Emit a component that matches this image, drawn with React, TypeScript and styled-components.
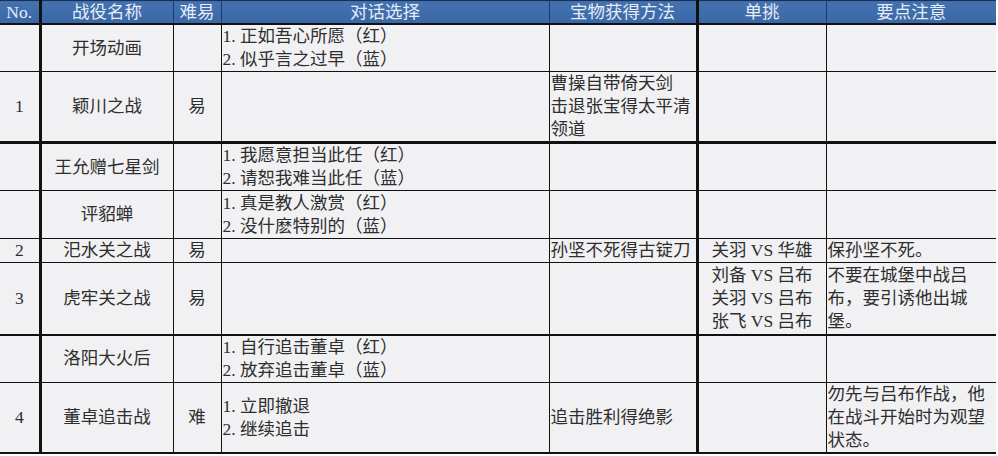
import React from 'react'
import styled, { createGlobalStyle } from 'styled-components'

const Global = createGlobalStyle`
  html, body {
    margin: 0;
    padding: 0;
    background: #ffffff;
  }
`

const Sheet = styled.table`
  width: 996px;
  table-layout: fixed;
  border-collapse: collapse;
  font-family: "Liberation Serif", "Noto Sans CJK SC", serif;
  font-size: 17.5px;
  color: #2e2e2e;
  text-spacing-trim: space-all;
  border-bottom: 2px solid #111;
`

const HeadCell = styled.th<{ $thick?: boolean }>`
  height: 22px;
  padding: 0;
  background: linear-gradient(#4472b0, #3a67a6);
  color: #e4ecf7;
  font-weight: normal;
  font-size: 17.5px;
  line-height: 22px;
  text-align: center;
  border-top: 1px solid #1c2f52;
  border-bottom: 2px solid #111;
  border-left: ${p => (p.$thick ? '3px solid #111' : '1px solid #1f3b66')};
  &:first-child {
    border-left: none;
  }
`

const Row = styled.tr<{ $h: number; $bottom?: number }>`
  height: ${p => p.$h}px;
  & > td {
    border-bottom: ${p => p.$bottom ?? 1}px solid #111;
  }
`

const Cell = styled.td<{ $align?: 'left' | 'center'; $thick?: boolean }>`
  padding: 0 0 0 ${p => (p.$align === 'left' ? '1px' : '0')};
  background: #f1f1f3;
  text-align: ${p => p.$align ?? 'center'};
  vertical-align: middle;
  line-height: 23px;
  white-space: pre-line;
  overflow: hidden;
  border-left: ${p => (p.$thick ? '3px' : '1px')} solid #111;
  &:first-child {
    border-left: none;
  }
`

type Line = {
  h: number
  bottom?: number
  no: string
  name: string
  diff: string
  talk: string
  treasure: string
  duel: string
  note: string
}

const rows: Line[] = [
  { h: 46, no: '', name: '开场动画', diff: '', talk: '1. 正如吾心所愿（红）\n2. 似乎言之过早（蓝）', treasure: '', duel: '', note: '' },
  { h: 70, bottom: 3, no: '1', name: '颖川之战', diff: '易', talk: '', treasure: '曹操自带倚天剑\n击退张宝得太平清\n领道', duel: '', note: '' },
  { h: 47, no: '', name: '王允赠七星剑', diff: '', talk: '1. 我愿意担当此任（红）\n2. 请恕我难当此任（蓝）', treasure: '', duel: '', note: '' },
  { h: 48, no: '', name: '评貂蝉', diff: '', talk: '1. 真是教人激赏（红）\n2. 没什麽特别的（蓝）', treasure: '', duel: '', note: '' },
  { h: 24, no: '2', name: '汜水关之战', diff: '易', talk: '', treasure: '孙坚不死得古锭刀', duel: '关羽 VS 华雄', note: '保孙坚不死。' },
  { h: 72, bottom: 2, no: '3', name: '虎牢关之战', diff: '易', talk: '', treasure: '', duel: '刘备 VS 吕布\n关羽 VS 吕布\n张飞 VS 吕布', note: '不要在城堡中战吕\n布，要引诱他出城\n堡。' },
  { h: 48, no: '', name: '洛阳大火后', diff: '', talk: '1. 自行追击董卓（红）\n2. 放弃追击董卓（蓝）', treasure: '', duel: '', note: '' },
  { h: 70, bottom: 2, no: '4', name: '董卓追击战', diff: '难', talk: '1. 立即撤退\n2. 继续追击', treasure: '追击胜利得绝影', duel: '', note: '勿先与吕布作战，他\n在战斗开始时为观望\n状态。' },
]

const widths = [40, 133, 48, 328, 148, 129, 170]

export default function App() {
  return (
    <>
      <Global />
      <Sheet>
        <colgroup>
          {widths.map((w, i) => (
            <col key={i} style={{ width: w }} />
          ))}
        </colgroup>
        <thead>
          <tr>
            <HeadCell>No.</HeadCell>
            <HeadCell $thick>战役名称</HeadCell>
            <HeadCell>难易</HeadCell>
            <HeadCell>对话选择</HeadCell>
            <HeadCell>宝物获得方法</HeadCell>
            <HeadCell $thick>单挑</HeadCell>
            <HeadCell>要点注意</HeadCell>
          </tr>
        </thead>
        <tbody>
          {rows.map((r, i) => (
            <Row key={i} $h={r.h} $bottom={r.bottom}>
              <Cell>{r.no}</Cell>
              <Cell $thick>{r.name}</Cell>
              <Cell>{r.diff}</Cell>
              <Cell $align="left">{r.talk}</Cell>
              <Cell $align="left">{r.treasure}</Cell>
              <Cell $thick>{r.duel}</Cell>
              <Cell $align="left">{r.note}</Cell>
            </Row>
          ))}
        </tbody>
      </Sheet>
    </>
  )
}
